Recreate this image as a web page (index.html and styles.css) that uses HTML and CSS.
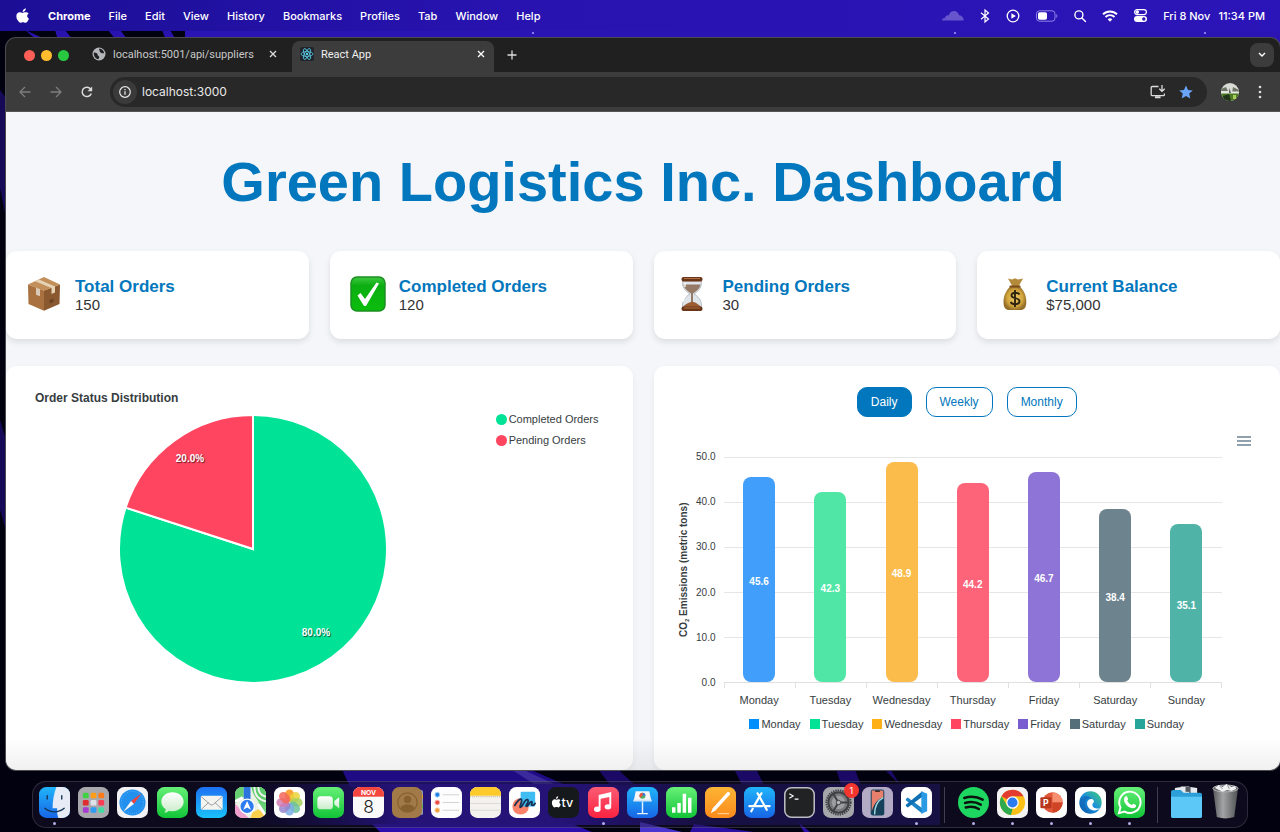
FILE: index.html
```html
<!DOCTYPE html>
<html lang="en">
<head>
<meta charset="utf-8">
<title>React App</title>
<link rel="stylesheet" href="styles.css">
</head>
<body>
<svg class="wallpaper" viewBox="0 0 1280 832" preserveAspectRatio="none" aria-hidden="true">
  <defs><linearGradient id="glow"><stop stop-color="#1a0a6e" stop-opacity="0"/><stop offset=".35" stop-color="#2c0fa8"/><stop offset=".7" stop-color="#2c0fa8"/><stop offset="1" stop-color="#150a50"/></linearGradient></defs>
  <rect width="1280" height="832" fill="#020110"/>
  <rect x="185" width="1095" height="60" fill="#2a15b4"/>
  <path d="M25 30l22 10h-10zM55 30h10l8 10H58zM108 30h12l8 10h-12zM162 30h8l6 10h-10z" fill="#2a12b0"/>
  <path d="M0 90l6 8v120l-6-30zM0 420l6 20v90l-6-20z" fill="#160a58"/>
  <path d="M340 765h180l50 22H350z" fill="#1f0b84"/>
  <path d="M240 784h460v41H240z" fill="url(#glow)"/>
  <path d="M700 784h240v41H700z" fill="#150a50"/>
  <path d="M372 824h200l20 8H380z" fill="#2d0fae"/>
  <path d="M512 770h12l30 14h-20z" fill="#3a2a9c"/>
  <path d="M595 765h18l22 20h-25zM732 765h22l10 20h-22zM835 765h18l8 20h-20zM880 765h8l12 20z" fill="#1a0a66"/>
  <path d="M640 822l42 10h-42z" fill="#4a35d0"/>
  <path d="M690 832l4-8 60 8zM798 822l12 10h-6z" fill="#2c10a4"/>
  <g fill="#a9a0ff"><circle cx="955" cy="33" r="1"/><circle cx="1205" cy="33" r="1"/><circle cx="533" cy="33" r="1"/></g>
</svg>

<header class="menubar">
  <nav class="menus" aria-label="Menu bar">
    <button class="menu-item" aria-label="Apple"><svg width="14" height="16" viewBox="0 0 14 16"><path fill="#fff" d="M9.800.3c.1 1-.3 1.900-.8 2.500-.6.700-1.400 1.200-2.300 1.100-.1-.9.300-1.800.9-2.400C8.200.8 9.100.4 9.800.3zM12.700 5.500c-1 .600-1.500 1.400-1.500 2.400 0 1.200.7 2.200 1.800 2.600-.3.900-.7 1.700-1.200 2.400-.7 1-1.400 1.900-2.400 1.900-1 0-1.300-.6-2.400-.6s-1.500.6-2.400.6c-1 0-1.800-1-2.500-2C.9 11.300.2 9.500.4 7.700.5 5.500 2 4.200 3.600 4.200c1.100 0 2 .7 2.700.7.700 0 1.800-.8 3.200-.7 1.300 0 2.500.5 3.200 1.300z"/></svg></button>
    <button class="menu-item app-name">Chrome</button>
    <button class="menu-item">File</button>
    <button class="menu-item">Edit</button>
    <button class="menu-item">View</button>
    <button class="menu-item">History</button>
    <button class="menu-item">Bookmarks</button>
    <button class="menu-item">Profiles</button>
    <button class="menu-item">Tab</button>
    <button class="menu-item">Window</button>
    <button class="menu-item">Help</button>
  </nav>
  <div class="status">
    <svg width="22" height="12" viewBox="0 0 22 12"><path d="M0 10.500c0-2 1.500-2.700 3-2.600C3.300 6 5 5 6.700 5.500 7.500 2.300 9.700 1 12 1c2.600 0 4.500 1.700 5 4.200 2.700 0 4.600 2 4.800 5.300z" fill="#6655cc"/></svg>
    <svg width="10" height="14" viewBox="0 0 10 14" fill="none" stroke="#fff" stroke-width="1.200"><path d="M1 3.800l7.500 6.200L5 13V1l3.500 3L1 10.200"/></svg>
    <svg width="14" height="14" viewBox="0 0 14 14"><circle cx="7" cy="7" r="5.800" fill="none" stroke="#fff" stroke-width="1.300"/><path d="M5.400 4.300v5.400L9.900 7z" fill="#fff"/></svg>
    <svg width="22" height="12" viewBox="0 0 22 12"><rect x=".5" y=".8" width="18.500" height="10.400" rx="3" fill="none" stroke="#8f83e6"/><rect x="2" y="2.300" width="9" height="7.400" rx="1.700" fill="#fff"/><path d="M20.300 4v4c1.400-.5 1.400-3.500 0-4z" fill="#8f83e6"/></svg>
    <svg width="12" height="12" viewBox="0 0 12 12" fill="none" stroke="#fff" stroke-width="1.400"><circle cx="4.900" cy="4.900" r="4"/><path d="M7.900 7.900l3.600 3.600" stroke-linecap="round"/></svg>
    <svg width="16" height="12" viewBox="0 0 16 12" fill="none" stroke="#fff" stroke-width="1.900"><path d="M1 4.300a10 10 0 0 1 14 0M3.500 7a6.300 6.300 0 0 1 9 0"/><path d="M8 11.800L5.700 9.300a3.300 3.300 0 0 1 4.600 0z" fill="#fff" stroke="none"/></svg>
    <svg width="13" height="13" viewBox="0 0 13 13"><rect x=".6" y=".6" width="11.800" height="5" rx="2.500" fill="none" stroke="#fff" stroke-width="1.200"/><circle cx="3.300" cy="3.100" r="1.800" fill="#fff"/><rect y="7" width="13" height="6" rx="3" fill="#fff"/><circle cx="9.800" cy="10" r="1.700" fill="#2a15b4"/></svg>
    <time class="clock"><span>Fri 8 Nov</span><span>11:34 PM</span></time>
  </div>
</header>

<div class="window">
  <div class="tabstrip">
    <div class="lights">
      <button class="light red" aria-label="Close window"></button>
      <button class="light yellow" aria-label="Minimize window"></button>
      <button class="light green" aria-label="Zoom window"></button>
    </div>
    <div class="tabs">
      <div class="tab">
        <svg width="14" height="14" viewBox="0 0 14 14"><circle cx="7" cy="7" r="6.500" fill="#b4b6ba"/><path d="M1.800 5.500c1.700-.2 3.700.6 3.900 2.400.1 1 1.500.8 1.500 2 0 1-.6 1.700-.7 2.400C3.800 12 1.500 9.500 1.800 5.500zM7 1.800c-.2 1.500 1 1.400.8 2.700-.1 1 .9.900 1.600 1.400.6.500 1.800.3 2.700.4C12 3.500 9.500 1.600 7 1.800z" fill="#202122"/></svg>
        <span class="tab-title">localhost:5001/api/suppliers</span>
        <button class="icon-btn" aria-label="Close tab"><svg width="8" height="8" viewBox="0 0 8 8"><path d="M1 1l6 6M7 1L1 7" stroke="#dcdcdc" stroke-width="1.300"/></svg></button>
      </div>
      <div class="tab active">
        <svg width="14" height="14" viewBox="0 0 14 14"><rect width="14" height="14" rx="2" fill="#20252c"/><g fill="none" stroke="#5ccde8" stroke-width=".8"><ellipse cx="7" cy="7" rx="6" ry="2.400"/><ellipse cx="7" cy="7" rx="6" ry="2.400" transform="rotate(60 7 7)"/><ellipse cx="7" cy="7" rx="6" ry="2.400" transform="rotate(120 7 7)"/></g><circle cx="7" cy="7" r="1.200" fill="#5ccde8"/></svg>
        <span class="tab-title">React App</span>
        <button class="icon-btn" aria-label="Close tab"><svg width="8" height="8" viewBox="0 0 8 8"><path d="M1 1l6 6M7 1L1 7" stroke="#fff" stroke-width="1.300"/></svg></button>
      </div>
    </div>
    <button class="icon-btn new-tab" aria-label="New tab"><svg width="10" height="10" viewBox="0 0 10 10"><path d="M5 .5v9M.5 5h9" stroke="#dcdcdc" stroke-width="1.300"/></svg></button>
    <button class="tab-search" aria-label="Search tabs"><svg width="8" height="6" viewBox="0 0 8 6"><path d="M1 1l3 3 3-3" fill="none" stroke="#fff" stroke-width="1.400"/></svg></button>
  </div>

  <div class="toolbar">
    <button class="icon-btn" aria-label="Back"><svg width="12" height="12" viewBox="0 0 12 12" fill="none" stroke="#7d7d7d" stroke-width="1.300"><path d="M11.500 6H1M6 1L1 6l5 5"/></svg></button>
    <button class="icon-btn" aria-label="Forward"><svg width="12" height="12" viewBox="0 0 12 12" fill="none" stroke="#7d7d7d" stroke-width="1.300"><path d="M.5 6H11M6 1l5 5-5 5"/></svg></button>
    <button class="icon-btn" aria-label="Reload"><svg width="12" height="12" viewBox="0 0 12 12"><path d="M10.300 7.500A4.700 4.700 0 1 1 9.600 3" fill="none" stroke="#dcdcdc" stroke-width="1.500"/><path d="M11.200.5v4.700H6.500z" fill="#dcdcdc"/></svg></button>
    <div class="omnibox">
      <button class="site-info" aria-label="Site information"><svg width="12" height="12" viewBox="0 0 12 12"><circle cx="6" cy="6" r="5.300" fill="none" stroke="#e8e8e8" stroke-width="1.200"/><path d="M6 5.300v3.500M6 3v1.300" stroke="#e8e8e8" stroke-width="1.300"/></svg></button>
      <input class="url" type="text" value="localhost:3000" aria-label="Address">
      <button class="icon-btn" aria-label="Install app"><svg width="16" height="14" viewBox="0 0 16 14" fill="none" stroke="#dcdcdc" stroke-width="1.300"><path d="M8.500 1.500H2.200a1 1 0 0 0-1 1v7.200a1 1 0 0 0 1 1h11.200a1 1 0 0 0 1-1V8.500M12 0v6M9.300 3.700L12 6.400l2.700-2.700"/><path d="M5 12.300h5.500" stroke-width="2"/></svg></button>
      <button class="icon-btn" aria-label="Edit bookmark"><svg width="14" height="14" viewBox="0 0 14 14"><path d="M7 .5l2 4.500 4.800.4-3.600 3.200 1.100 4.800L7 10.900l-4.300 2.500 1.100-4.800L.2 5.400 5 5z" fill="#6aa5fb"/></svg></button>
    </div>
    <button class="icon-btn" aria-label="Profile"><svg width="18" height="18" viewBox="0 0 18 18"><defs><clipPath id="avatar"><circle cx="9" cy="9" r="9"/></clipPath></defs><g clip-path="url(#avatar)"><rect width="18" height="18" fill="#d9dbd6"/><path d="M0 6l5-2 2 4H0zM12 4l6 3v3h-7z" fill="#6d7666"/><rect y="8.500" width="18" height="2" fill="#e8eae4"/><rect y="10.500" width="18" height="8" fill="#4d7a26"/><path d="M2 13l6-2 2 7H3z" fill="#20351a"/><path d="M12 12h3v4h-3z" fill="#a8cf58"/><path d="M8.500 5l1.500 5H8z" fill="#555"/></g></svg></button>
    <button class="icon-btn kebab" aria-label="Chrome menu"><svg width="4" height="14" viewBox="0 0 4 14" fill="#e0e0e0"><circle cx="2" cy="2" r="1.300"/><circle cx="2" cy="7" r="1.300"/><circle cx="2" cy="12" r="1.300"/></svg></button>
  </div>

  <main class="page">
    <h1 class="page-title">Green Logistics Inc. Dashboard</h1>

    <section class="stats">
      <article class="stat">
        <svg class="stat-icon" viewBox="0 0 36 36"><path d="M2 8.500l16 6v20.300L2.500 28z" fill="#a9713f"/><path d="M34 8.500l-16 6v20.300L33.500 28z" fill="#8b5930"/><path d="M2 8.500L18 1l16 7.500-16 6.200z" fill="#c28e5a"/><path d="M9 5.200L25.500 12v6l3.500-1.600v-6L13 3.400z" fill="#e6d2b4"/><path d="M10 11.700v7l4 1.600v-7z" fill="#e7e0d6" opacity=".8"/><path d="M23.500 24l4-1.600v3.500l-4 1.700z" fill="#6b4220"/></svg>
        <div class="stat-text"><h2 class="stat-title">Total Orders</h2><p class="stat-value">150</p></div>
      </article>
      <article class="stat">
        <svg class="stat-icon" viewBox="0 0 36 36"><defs><linearGradient id="tick" x2="0" y2="1"><stop stop-color="#3fca43"/><stop offset=".25" stop-color="#0cae12"/><stop offset="1" stop-color="#0bbd0d"/></linearGradient></defs><rect x="1" y="1" width="34" height="34" rx="6" fill="url(#tick)" stroke="#1c8f22" stroke-width="1.500"/><path d="M7.500 19.500l3-2.500 4.500 6L26.500 6.500l2.500 1L16 30h-2z" fill="#fff"/></svg>
        <div class="stat-text"><h2 class="stat-title">Completed Orders</h2><p class="stat-value">120</p></div>
      </article>
      <article class="stat">
        <svg class="stat-icon" viewBox="0 0 36 36"><path d="M8.500 5h19c0 6-1.500 9-7.500 13 6 3.500 7.500 7.500 7.500 13h-19c0-5.500 1.500-9.500 7.500-13-6-4-7.500-7-7.500-13z" fill="#dfe5ea" stroke="#b6bdc5"/><path d="M9.500 8.500h17c-.5 3.500-3 6-7.500 9v9.500c4 1 7.500 2.500 8 4H9c.5-1.500 4-3 8-4v-9.500c-4.500-3-7-5.500-7.500-9z" fill="#957a68"/><path d="M17 26c3-1 8 2.500 9.500 5.200H9.500C11 28.500 14 26.500 17 26z" fill="#9c5d33"/><path d="M12 19.500c-2 2-2.500 4-2.500 6M11 7v4" stroke="#fff" stroke-width="1.300" fill="none"/><rect x="7.500" y="1" width="21" height="4.500" rx="2" fill="#6b3517"/><rect x="7.500" y="30.500" width="21" height="4.500" rx="2" fill="#6b3517"/><path d="M10 2.500h16M10 32h16" stroke="#b26e45"/></svg>
        <div class="stat-text"><h2 class="stat-title">Pending Orders</h2><p class="stat-value">30</p></div>
      </article>
      <article class="stat">
        <svg class="stat-icon" viewBox="0 0 36 36"><defs><radialGradient id="bag"><stop stop-color="#f0ce68"/><stop offset=".7" stop-color="#d0a33b"/><stop offset="1" stop-color="#96702a"/></radialGradient></defs><path d="M11 2.500l4 1 3-1.300 3 1.300 5-1-4.500 8h-6z" fill="#b48a3c"/><path d="M14 10h8c5 4 7.500 10 7.300 16 0 6-2.300 8-5.500 8H12c-3.200 0-5.500-2-5.500-8C6.500 20 9 14 14 10z" fill="url(#bag)"/><path d="M13.500 10.500h9" stroke="#7b4d1c" stroke-width="2.200" stroke-linecap="round"/><path d="M22.500 18.500c-1-2-8-3-8 .9 0 3.600 8 2 8 5.800 0 3.800-7.500 3.600-8.800.8M18 14v17" fill="none" stroke="#2e2410" stroke-width="1.900"/></svg>
        <div class="stat-text"><h2 class="stat-title">Current Balance</h2><p class="stat-value">$75,000</p></div>
      </article>
    </section>

    <section class="charts">
      <article class="panel status-panel">
        <h3 class="chart-title">Order Status Distribution</h3>
        <div class="pie-row">
          <svg class="pie" viewBox="0 0 270 270" role="img" aria-label="Completed 80%, pending 20%">
            <path d="M135 135V1A134 134 0 1 1 7.560 93.590z" fill="#00e396" stroke="#fff" stroke-width="2"/>
            <path d="M135 135L7.560 93.590A134 134 0 0 1 135 1z" fill="#ff4560" stroke="#fff" stroke-width="2"/>
            <text class="pie-label" x="198" y="222">80.0%</text>
            <text class="pie-label" x="72" y="48">20.0%</text>
          </svg>
          <ul class="pie-legend">
            <li><i class="dot completed"></i>Completed Orders</li>
            <li><i class="dot pending"></i>Pending Orders</li>
          </ul>
        </div>
      </article>

      <article class="panel emissions-panel">
        <div class="range">
          <button class="range-btn selected">Daily</button>
          <button class="range-btn">Weekly</button>
          <button class="range-btn">Monthly</button>
        </div>
        <div class="chart-tools">
          <button class="icon-btn" aria-label="Chart menu"><svg width="14" height="10" viewBox="0 0 14 10"><path d="M0 1h14M0 5h14M0 9h14" stroke="#6e8192" stroke-width="1.500"/></svg></button>
        </div>
        <div class="bar-chart">
          <div class="axis-title"><span>CO<sub>2</sub> Emissions (metric tons)</span></div>
          <div class="y-axis"><span>50.0</span><span>40.0</span><span>30.0</span><span>20.0</span><span>10.0</span><span>0.0</span></div>
          <div class="plot">
            <div class="slot"><div class="bar mon" style="height:91.2%">45.6</div></div>
            <div class="slot"><div class="bar tue" style="height:84.6%">42.3</div></div>
            <div class="slot"><div class="bar wed" style="height:97.8%">48.9</div></div>
            <div class="slot"><div class="bar thu" style="height:88.4%">44.2</div></div>
            <div class="slot"><div class="bar fri" style="height:93.4%">46.7</div></div>
            <div class="slot"><div class="bar sat" style="height:76.8%">38.4</div></div>
            <div class="slot"><div class="bar sun" style="height:70.2%">35.1</div></div>
          </div>
          <div class="ticks"><i></i><i></i><i></i><i></i><i></i><i></i><i></i></div>
          <div class="x-axis"><span>Monday</span><span>Tuesday</span><span>Wednesday</span><span>Thursday</span><span>Friday</span><span>Saturday</span><span>Sunday</span></div>
        </div>
        <ul class="bar-legend">
          <li><i class="swatch mon"></i>Monday</li>
          <li><i class="swatch tue"></i>Tuesday</li>
          <li><i class="swatch wed"></i>Wednesday</li>
          <li><i class="swatch thu"></i>Thursday</li>
          <li><i class="swatch fri"></i>Friday</li>
          <li><i class="swatch sat"></i>Saturday</li>
          <li><i class="swatch sun"></i>Sunday</li>
        </ul>
      </article>
    </section>
  </main>
</div>

<nav class="dock" aria-label="Dock">
  <svg class="defs" aria-hidden="true"><defs>
    <linearGradient id="g-green" x2="0" y2="1"><stop stop-color="#66f077"/><stop offset="1" stop-color="#12c437"/></linearGradient>
    <linearGradient id="g-blue" x2="0" y2="1"><stop stop-color="#1d70f2"/><stop offset="1" stop-color="#1ac2fb"/></linearGradient>
    <linearGradient id="g-sky" x2="0" y2="1"><stop stop-color="#20b4fb"/><stop offset="1" stop-color="#1766e6"/></linearGradient>
    <linearGradient id="g-red" x2="0" y2="1"><stop stop-color="#fc5c74"/><stop offset="1" stop-color="#fa2340"/></linearGradient>
    <linearGradient id="g-orange" x2="0" y2="1"><stop stop-color="#fdb535"/><stop offset="1" stop-color="#fb8a1c"/></linearGradient>
    <linearGradient id="g-white" x2="0" y2="1"><stop stop-color="#fff"/><stop offset="1" stop-color="#c9ecc9"/></linearGradient>
    <linearGradient id="g-edge" x1="0" y1="1" x2="1" y2="0"><stop stop-color="#0c59a4"/><stop offset=".5" stop-color="#1b8fdc"/><stop offset="1" stop-color="#45d072"/></linearGradient>
    <linearGradient id="g-can" x2="1"><stop stop-color="#555759"/><stop offset=".4" stop-color="#a2a4a6"/><stop offset="1" stop-color="#4e5052"/></linearGradient>
    <clipPath id="plate"><rect width="32" height="32" rx="7.500"/></clipPath>
  </defs></svg>

  <button class="app running" aria-label="Finder"><svg viewBox="0 0 32 32"><g clip-path="url(#plate)"><rect width="32" height="32" fill="url(#g-sky)"/><path d="M18 0h14v32H20c-1-3-1.500-6-1.300-10h-4.700C14 14 15.500 6 18 0z" fill="#e6ebf5"/></g><path d="M8.500 9v3.500M23.500 9v3.500M6 22c6 5 14 5 20 0" stroke="#163352" stroke-width="1.400" fill="none" stroke-linecap="round"/></svg></button>
  <button class="app" aria-label="Launchpad"><svg viewBox="0 0 32 32"><rect width="32" height="32" rx="7.500" fill="#a9a9ad"/><g><rect x="5" y="6" width="6" height="5.500" rx="1.300" fill="#3fd044"/><rect x="13" y="6" width="6" height="5.500" rx="1.300" fill="#ff9e1b"/><rect x="21" y="6" width="6" height="5.500" rx="1.300" fill="#ff7a18"/><rect x="5" y="13.500" width="6" height="5.500" rx="1.300" fill="#df2c30"/><rect x="13" y="13.500" width="6" height="5.500" rx="1.300" fill="#dfe2e8"/><rect x="21" y="13.500" width="6" height="5.500" rx="1.300" fill="#fa3d55"/><rect x="5" y="21" width="6" height="5.500" rx="1.300" fill="#a83bd0"/><rect x="13" y="21" width="6" height="5.500" rx="1.300" fill="#2e9bf5"/><rect x="21" y="21" width="6" height="5.500" rx="1.300" fill="#42dca0"/></g></svg></button>
  <button class="app" aria-label="Safari"><svg viewBox="0 0 32 32"><rect width="32" height="32" rx="7.500" fill="#f2f2f4"/><circle cx="16" cy="16" r="13.500" fill="#2290ee"/><circle cx="16" cy="16" r="11.500" fill="none" stroke="#74b8f5" stroke-width="1" stroke-dasharray=".7 1.500"/><path d="M25.500 6.500L17.500 17.500l-3-3z" fill="#f0443c"/><path d="M6.500 25.500L14.500 14.500l3 3z" fill="#f6f6f6"/></svg></button>
  <button class="app" aria-label="Messages"><svg viewBox="0 0 32 32"><rect width="32" height="32" rx="7.500" fill="url(#g-green)"/><path d="M16 5.500c6.500 0 11.500 4.300 11.500 9.800S22.500 25 16 25c-1.300 0-2.500-.1-3.500-.5-1.500 1.300-3.200 2-5 2 1-1.200 1.500-2.300 1.500-3.500-2.800-1.800-4.500-4.500-4.500-7.700C4.500 9.800 9.500 5.500 16 5.500z" fill="url(#g-white)"/></svg></button>
  <button class="app" aria-label="Mail"><svg viewBox="0 0 32 32"><rect width="32" height="32" rx="7.500" fill="url(#g-blue)"/><rect x="5" y="9" width="22.500" height="14.500" rx="1.500" fill="#f3f3f0"/><path d="M5.500 10l9 8q1.700 1.200 3.400 0l9-8M5.500 23l7.500-7M27 23l-7.500-7" fill="none" stroke="#8d9297" stroke-width=".9"/></svg></button>
  <button class="app" aria-label="Maps"><svg viewBox="0 0 32 32"><g clip-path="url(#plate)"><rect width="32" height="32" fill="#e9f2e5"/><path d="M0 0h9v10L0 17z" fill="#66cf70"/><path d="M0 17l14 15H0z" fill="#ee9fce"/><path d="M17 0h15v32z" fill="#6bd177"/><path d="M13 0h18l1 18C25 17 18 9 17 0" fill="#5ecb6a"/><path d="M24 0c0 5 3 9 8 10M20 0c0 8 4 13 12 15" stroke="#f2f2f2" stroke-width="2" fill="none"/><path d="M18 26l6-3 8 5v4H16z" fill="#fbd04c"/><path d="M9 0h7v18H9z" fill="#2b73dd"/><path d="M0 15l8-4M24 18l8 12" stroke="#fff" stroke-width="3"/></g><circle cx="12.500" cy="20" r="7.500" fill="#2e7cf0" stroke="#fff" stroke-width="1.300"/><path d="M12.500 14.500l4 9-4-2.300-4 2.300z" fill="#fff"/></svg></button>
  <button class="app" aria-label="Photos"><svg viewBox="0 0 32 32"><rect width="32" height="32" rx="7.500" fill="#fff"/><g opacity=".9"><rect x="11.500" y="2.500" width="9" height="13" rx="4.500" fill="#fb9a24"/><rect x="11.500" y="2.500" width="9" height="13" rx="4.500" fill="#e9cf25" opacity=".85" transform="rotate(45 16 16)"/><rect x="11.500" y="2.500" width="9" height="13" rx="4.500" fill="#9fcb46" opacity=".85" transform="rotate(90 16 16)"/><rect x="11.500" y="2.500" width="9" height="13" rx="4.500" fill="#5cbb92" opacity=".85" transform="rotate(135 16 16)"/><rect x="11.500" y="2.500" width="9" height="13" rx="4.500" fill="#6da6e4" opacity=".85" transform="rotate(180 16 16)"/><rect x="11.500" y="2.500" width="9" height="13" rx="4.500" fill="#8d78c8" opacity=".85" transform="rotate(225 16 16)"/><rect x="11.500" y="2.500" width="9" height="13" rx="4.500" fill="#ce6faa" opacity=".85" transform="rotate(270 16 16)"/><rect x="11.500" y="2.500" width="9" height="13" rx="4.500" fill="#f2584a" opacity=".85" transform="rotate(315 16 16)"/></g></svg></button>
  <button class="app" aria-label="FaceTime"><svg viewBox="0 0 32 32"><rect width="32" height="32" rx="7.500" fill="url(#g-green)"/><rect x="4.500" y="9.500" width="16" height="13.500" rx="3.500" fill="url(#g-white)"/><path d="M22 14.500l5-4v11.500l-5-4z" fill="url(#g-white)"/></svg></button>
  <button class="app" aria-label="Calendar"><svg viewBox="0 0 32 32"><g clip-path="url(#plate)"><rect width="32" height="32" fill="#fafafa"/><rect width="32" height="10" fill="#f4453e"/></g><text class="cal-month" x="16" y="8">NOV</text><text class="cal-day" x="16" y="27">8</text></svg></button>
  <button class="app" aria-label="Contacts"><svg viewBox="0 0 32 32"><rect x="27" y="3" width="5" height="26" rx="2" fill="#8f9bb0"/><path d="M31 8v4" stroke="#e8a33a" stroke-width="2"/><path d="M31 18v4" stroke="#5fba5a" stroke-width="2"/><rect width="31" height="32" rx="7.500" fill="#a27a47"/><circle cx="16" cy="16" r="10" fill="none" stroke="#86612f" stroke-width="1.300"/><circle cx="16" cy="12.800" r="3.800" fill="#86612f"/><path d="M8.500 22c2-5.500 13-5.500 15 0-4 5-11 5-15 0z" fill="#86612f"/></svg></button>
  <button class="app" aria-label="Reminders"><svg viewBox="0 0 32 32"><rect width="32" height="32" rx="7.500" fill="#fdfdfd"/><g stroke-width="1"><circle cx="6.500" cy="8" r="2.500" fill="#1e7fe6" stroke="#a9cff7"/><circle cx="6.500" cy="16" r="2.500" fill="#ee4a42" stroke="#f8bdb9"/><circle cx="6.500" cy="24" r="2.500" fill="#f29b37" stroke="#f9d6ae"/></g><path d="M12 8h17M12 16h17M12 24h17" stroke="#d2d2d4" stroke-width="1"/></svg></button>
  <button class="app" aria-label="Notes"><svg viewBox="0 0 32 32"><g clip-path="url(#plate)"><rect width="32" height="32" fill="#f3f2ee"/><rect width="32" height="9" fill="#fccb2b"/></g><path d="M0 10h32" stroke="#b9b08f" stroke-dasharray="1 1"/><path d="M0 17h32M0 24h32" stroke="#dcdad3"/></svg></button>
  <button class="app" aria-label="Freeform"><svg viewBox="0 0 32 32"><rect width="32" height="32" rx="7.500" fill="#fff"/><circle cx="12" cy="20" r="8.500" fill="#f98268"/><rect x="12" y="5" width="15" height="15" rx="1" fill="#3fbdf2"/><path d="M6 19c2-4 6-8 7-6s-3 8-1 8 4-9 7-8-3 7-1 7 3-5 5-5-1 4 1 4 2-1 3-2" fill="none" stroke="#173054" stroke-width="1.800" stroke-linecap="round"/></svg></button>
  <button class="app" aria-label="TV"><svg viewBox="0 0 32 32"><rect width="32" height="32" rx="7.500" fill="#15191c"/><path d="M10.500 9.500c.1 1.600-1 2.700-2.300 2.700 0-1.500 1-2.500 2.300-2.700zM12.800 13.800c-1.600 1.200-1.300 3.500.4 4.300-.6 1.700-1.500 3-2.600 3-.8 0-1-.4-1.900-.4s-1.200.4-1.900.4c-1.500 0-2.800-2.600-2.800-4.800 0-2.500 1.500-3.700 2.900-3.700.9 0 1.500.5 2 .5s1.300-.6 2.300-.5c.7 0 1.300.4 1.600 1.200z" fill="#fff"/><text class="tv" x="14" y="21">tv</text></svg></button>
  <button class="app running" aria-label="Music"><svg viewBox="0 0 32 32"><rect width="32" height="32" rx="7.500" fill="url(#g-red)"/><path d="M12 22V9l11-2.500V19" fill="none" stroke="#fff" stroke-width="2"/><path d="M12 9.500l11-2.500v3L12 12.500z" fill="#fff"/><ellipse cx="9.600" cy="23" rx="3.400" ry="2.800" fill="#fff"/><ellipse cx="20.600" cy="20.500" rx="3.400" ry="2.800" fill="#fff"/></svg></button>
  <button class="app" aria-label="Keynote"><svg viewBox="0 0 32 32"><rect width="32" height="32" rx="7.500" fill="url(#g-sky)"/><path d="M9 4.500h14l2 9.500H7z" fill="#f4f6f8"/><rect x="6.500" y="13" width="19" height="2" fill="#d2e4f5"/><circle cx="16" cy="9" r="3" fill="#4caf60"/><path d="M16 6a3 3 0 0 1 3 3h-3z" fill="#3f76e0"/><path d="M16 9l-2.500 2A3 3 0 0 1 16 6z" fill="#f0503c"/><path d="M16 15v12M10.500 27.500h11" stroke="#e6f2fc" stroke-width="1.500"/></svg></button>
  <button class="app" aria-label="Numbers"><svg viewBox="0 0 32 32"><rect width="32" height="32" rx="7.500" fill="url(#g-green)"/><path d="M8 26.500v-5.500M13.500 26.500v-10M19 26.500V7M24.500 26.500V11" stroke="#fff" stroke-width="3.600"/></svg></button>
  <button class="app" aria-label="Pages"><svg viewBox="0 0 32 32"><rect width="32" height="32" rx="7.500" fill="url(#g-orange)"/><path d="M23 5.500c1.500-1 3.500.7 2.700 2.300L11 24l-5 3 2-5z" fill="#fff"/><path d="M13 27.500h12" stroke="#ffdca6"/></svg></button>
  <button class="app" aria-label="App Store"><svg viewBox="0 0 32 32"><rect width="32" height="32" rx="7.500" fill="url(#g-sky)"/><path d="M14 6.500l9.500 17M18 6.500L10.500 19.500M9 22.500l-1.500 2.500M5.500 19.700h13.500M22.500 19.700h4" stroke="#fff" stroke-width="2.300" stroke-linecap="round"/></svg></button>
  <button class="app" aria-label="Terminal"><svg viewBox="0 0 32 32"><rect x=".8" y=".8" width="30.400" height="30.400" rx="7" fill="#202224" stroke="#b9bbc0" stroke-width="1.600"/><path d="M5.500 7l4 2.300-4 2.300M11 12.500h4" fill="none" stroke="#fff" stroke-width="1.100"/></svg></button>
  <button class="app" aria-label="System Settings"><svg viewBox="0 0 32 32"><rect width="32" height="32" rx="7.500" fill="#a6a7aa"/><circle cx="16" cy="16" r="12.500" fill="none" stroke="#3e4043" stroke-width="2" stroke-dasharray="1.500 .9"/><circle cx="16" cy="16" r="10.500" fill="#77797c" stroke="#3e4043" stroke-width="2"/><circle cx="16" cy="16" r="7" fill="#9b9da0"/><path d="M16 16h10.500M16 16L10.500 7M16 16l-5.500 9" stroke="#3e4043" stroke-width="2"/><circle cx="16" cy="16" r="2.300" fill="#b6b8ba" stroke="#3e4043"/></svg><span class="badge">1</span></button>
  <button class="app" aria-label="iPhone Mirroring"><svg viewBox="0 0 32 32"><rect width="32" height="32" rx="7.500" fill="#b3aac6"/><rect x="9" y="2.500" width="14" height="27" rx="2.500" fill="#15425a"/><path d="M10 3.500h12v7c-7 2-10 8-12 15z" fill="#e9806e"/><path d="M22 11c-6 3-9 9-9 17.500" stroke="#9fd4dc" stroke-width="1.500" fill="none"/><rect x="13.500" y="3.500" width="5" height="1.500" rx=".7" fill="#111"/></svg></button>
  <button class="app running" aria-label="Visual Studio Code"><svg viewBox="0 0 32 32"><rect width="32" height="32" rx="7.500" fill="#fff"/><path d="M5 12.500l2-1.700L22 22v5.500L5 13.800z" fill="#1e83c6"/><path d="M5 19.500l2 1.700L22 10V4.500L5 18.200z" fill="#0f6fb2"/><path d="M21 4.500l6 2.500v18l-6 2.500z" fill="#2a9ae4"/></svg></button>
  <span class="separator"></span>
  <button class="app running" aria-label="Spotify"><svg viewBox="0 0 32 32"><circle cx="16" cy="16" r="16" fill="#1ed760"/><path d="M6.500 11.300c6.500-2 13.500-1.300 19 1.800M7.300 16.500c5.500-1.600 11.500-1 16.200 1.700M8 21.200c4.600-1.200 9.600-.8 13.500 1.500" fill="none" stroke="#0c1410" stroke-width="2.600" stroke-linecap="round"/></svg></button>
  <button class="app running" aria-label="Chrome"><svg viewBox="0 0 32 32"><rect width="32" height="32" rx="7.500" fill="#f3f3f3"/><circle cx="16" cy="16" r="13" fill="#fbc116"/><path d="M16 16L4.700 9.500A13 13 0 0 1 27.300 9.500H16z" fill="#e33b2e"/><path d="M4.700 9.500L10.400 19.300 16 22.500 14.600 29A13 13 0 0 1 4.700 9.500z" fill="#2da94f"/><path d="M21.600 19.300L16 29h-1.500l3-8z" fill="#fbc116"/><circle cx="16" cy="16" r="6.500" fill="#fff"/><circle cx="16" cy="16" r="5.200" fill="#2c7bee"/></svg></button>
  <button class="app running" aria-label="PowerPoint"><svg viewBox="0 0 32 32"><rect width="32" height="32" rx="7.500" fill="#fff"/><circle cx="17" cy="16" r="10.500" fill="#e0583a"/><path d="M17 5.500A10.500 10.500 0 0 1 27.500 16H17z" fill="#f58f70"/><path d="M17 16h10.500A10.500 10.500 0 0 1 17 26.500z" fill="#cf4424"/><rect x="4.500" y="10.500" width="11.500" height="11.500" rx="1" fill="#b9371c"/><text class="ppt" x="10.200" y="19.500">P</text></svg></button>
  <button class="app running" aria-label="Edge"><svg viewBox="0 0 32 32"><rect width="32" height="32" rx="7.500" fill="#fff"/><circle cx="16" cy="16" r="11.500" fill="url(#g-edge)"/><path d="M17 12.500c-5 0-6 6-2.500 9.500 3 3 8 2.800 11.500 0-4.500 1-8.500-1-8-4 .2-1.300 1.500-1.700 1.500-3 0-1.500-1-2.500-2.500-2.500z" fill="#fff"/><path d="M5 14c2-5 9-6.500 12-1.500-5-1.500-8.500 3-6.500 8.500 1 3 3 5 5.500 6C9 27.500 3.500 21 5 14z" fill="#1268b8" opacity=".7"/></svg></button>
  <button class="app running" aria-label="WhatsApp"><svg viewBox="0 0 32 32"><rect width="32" height="32" rx="7.500" fill="url(#g-green)"/><path d="M5 27l1.700-6A11 11 0 1 1 11 25.400z" fill="none" stroke="#fff" stroke-width="2"/><path d="M11.500 10c1-1 1.800-.8 2.200.2l.8 2c.3.800-1 1.600-.8 2.100 1 2 2.300 3.300 4.500 4.200.6.200 1.300-1.500 2-1.200l2.300 1.200c1 .5-.3 3-2 3.300-4.500.8-10-4.500-10.200-8.500 0-1.400.5-2.600 1.200-3.300z" fill="#fff"/></svg></button>
  <span class="separator"></span>
  <button class="app" aria-label="Downloads"><svg viewBox="0 0 32 32"><path d="M4 1l6-1v8H4zM10-.5h9V9h-9zM20 0l7 1v7h-7z" fill="#e6eaee"/><path d="M15 0h4v5h-4z" fill="#55595d"/><path d="M0 5q0-2 2-2h8l3 3h17q2 0 2 2v22q0 2-2 2H2q-2 0-2-2z" fill="#2d9fd8"/><path d="M0 10h32v20q0 2-2 2H2q-2 0-2-2z" fill="#5cc8f8"/></svg></button>
  <button class="app" aria-label="Trash"><svg viewBox="0 0 32 32"><path d="M3 1h26l-4 30q-9 3-18 0z" fill="url(#g-can)"/><ellipse cx="16" cy="1.500" rx="13" ry="3.500" fill="#5d5f61" stroke="#b9bbbd"/><path d="M5 1l4-3 4 2 4-3 5 3 4-1 1 3-5 2-4-1-5 2-4-2z" fill="#f0f1f2"/><path d="M10-1l3 3M18-2l2 4" stroke="#8b8e91"/></svg></button>
</nav>
</body>
</html>
```
FILE: styles.css
```css
* { box-sizing: border-box; }

body {
  margin: 0;
  min-height: 100vh;
  display: flex;
  flex-direction: column;
  font-family: "Liberation Sans", Arial, sans-serif;
  color: #333;
  background: #020110;
}

h1, h2, h3, p, ul { margin: 0; padding: 0; }
ul { list-style: none; }
svg { display: block; overflow: visible; }
button { font: inherit; color: inherit; background: none; border: 0; padding: 0; cursor: pointer; }

.wallpaper {
  position: absolute;
  inset: 0;
  width: 100%;
  height: 100%;
  z-index: -1;
}

/* Menu bar */
.menubar {
  display: flex;
  justify-content: space-between;
  align-items: center;
  height: 31px;
  padding: 0 15px 0 16px;
  background: linear-gradient(90deg, #1c0f96, #2813b0 40%, #2b15b8);
  color: #fff;
  font: 500 11px Inter, sans-serif;
}
.menus, .status, .clock { display: flex; align-items: center; }
.menus { gap: 18px; }
.app-name { font-weight: 700; }
.status { gap: 16px; }
.clock { gap: 8px; }

/* Browser window */
.window {
  flex: 1;
  display: flex;
  flex-direction: column;
  margin: 7px 0 0 6px;
  border-radius: 10px;
  overflow: hidden;
  background: #3c3c3c;
  box-shadow: 0 0 0 1px #4a4a50;
}
.tabstrip {
  display: flex;
  align-items: center;
  height: 34px;
  padding: 0 6px 0 18px;
  background: #202020;
  color: #e3e3e3;
  font: 11px Roboto, sans-serif;
}
.lights { display: flex; gap: 6px; margin-right: 15px; }
.light { width: 11px; height: 11px; border-radius: 50%; }
.red { background: #ff5f57; }
.yellow { background: #febc2e; }
.green { background: #28c840; }
.tabs { display: flex; gap: 6px; }
.tab {
  display: flex;
  align-items: center;
  gap: 7px;
  width: 202px;
  height: 31px;
  margin-top: 3px;
  padding: 0 9px 5px 8px;
  border-radius: 8px 8px 0 0;
  color: #c8c8c8;
}
.tab.active { background: #3c3c3c; color: #f0f0f0; }
.tab-title { flex: 1; white-space: nowrap; }
.icon-btn { display: grid; place-items: center; }
.new-tab { margin-left: 13px; }
.tab-search {
  display: grid;
  place-items: center;
  width: 24px;
  height: 24px;
  margin-left: auto;
  border-radius: 8px;
  background: #3c3c3c;
}
.toolbar {
  display: flex;
  align-items: center;
  gap: 19px;
  height: 40px;
  padding: 0 18px 0 13px;
  border-bottom: 1px solid #555;
}
.omnibox {
  flex: 1;
  display: flex;
  align-items: center;
  gap: 13px;
  height: 30px;
  margin: 0 -5px 0 -2px;
  padding: 0 14px 0 3px;
  border-radius: 15px;
  background: #282828;
}
.site-info {
  display: grid;
  place-items: center;
  width: 24px;
  height: 24px;
  border-radius: 50%;
  background: #3a3a3a;
}
.url {
  flex: 1;
  min-width: 0;
  margin-left: -8px;
  padding: 0;
  border: 0;
  outline: 0;
  background: none;
  color: #e8e8e8;
  font: 12px Inter, sans-serif;
}

/* Dashboard */
.page {
  position: relative;
  flex: 1;
  display: flex;
  flex-direction: column;
  background: #f4f6f9;
}
.page::after {
  content: "";
  position: absolute;
  inset: auto 0 0;
  height: 32px;
  background: linear-gradient(transparent, rgba(0, 0, 0, 0.06));
  pointer-events: none;
}
.page-title {
  margin: 38px 0 37px;
  text-align: center;
  font-size: 56px;
  line-height: 64px;
  color: #0277bd;
}
.stats {
  display: grid;
  grid-template-columns: repeat(4, 1fr);
  gap: 21px;
  margin-bottom: 27px;
}
.stat {
  display: flex;
  align-items: center;
  gap: 13px;
  height: 88px;
  padding: 0 20px;
  border-radius: 11px;
  background: #fff;
  box-shadow: 0 3px 6px rgba(0, 0, 0, 0.1);
}
.stat-icon { width: 36px; height: 36px; margin-bottom: 2px; }
.stat-text { padding-top: 2px; line-height: 18px; }
.stat-title { font-size: 17px; color: #0277bd; }
.stat-value { font-size: 15px; }

.charts {
  flex: 1;
  display: grid;
  grid-template-columns: repeat(2, 1fr);
  gap: 21px;
}
.panel {
  border-radius: 11px;
  background: #fff;
  box-shadow: 0 3px 6px rgba(0, 0, 0, 0.06);
}
.status-panel { padding: 24px 34px 24px 29px; }
.chart-title { font-size: 12px; line-height: 16px; color: #373d3f; }
.pie-row {
  display: flex;
  justify-content: space-between;
  align-items: flex-start;
  padding-top: 3px;
}
.pie { width: 270px; height: 270px; margin: 5px 0 0 83px; }
.pie-label {
  fill: #fff;
  font-size: 10px;
  font-weight: 700;
  text-anchor: middle;
  text-shadow: 1px 1px 1px rgba(0, 0, 0, 0.6);
}
.pie-legend { font-size: 11px; line-height: 21px; color: #373d3f; }
.pie-legend li, .bar-legend li { display: flex; align-items: center; gap: 2px; }
.dot { width: 11px; height: 11px; border-radius: 50%; }
.completed { background: #00e396; }
.pending { background: #ff4560; }

.emissions-panel { padding-top: 21px; }
.range { display: flex; justify-content: center; gap: 14px; }
.range-btn {
  height: 30px;
  padding: 0 13px;
  border: 1px solid #0277bd;
  border-radius: 10px;
  color: #0277bd;
  font-size: 12px;
}
.range-btn.selected { background: #0277bd; color: #fff; }
.chart-tools {
  display: flex;
  justify-content: flex-end;
  height: 16px;
  margin: 16px 29px 8px 0;
}
.bar-chart {
  display: grid;
  grid-template-columns: 16px 24px 1fr;
  grid-template-rows: 226px 5px auto;
  margin: 0 58px 0 22px;
  font-size: 10px;
  color: #373d3f;
}
.axis-title {
  display: grid;
  place-items: center;
  writing-mode: vertical-rl;
  transform: rotate(180deg);
  font-weight: 700;
  white-space: nowrap;
}
.axis-title sub { font-size: 6px; }
.y-axis {
  display: flex;
  flex-direction: column;
  justify-content: space-between;
  margin: -8px 0;
  text-align: right;
  line-height: 16px;
}
.plot, .ticks, .x-axis { display: grid; grid-template-columns: repeat(7, 1fr); grid-column: 3; margin-left: 8px; }
.plot {
  border-bottom: 1px solid #e0e0e0;
  background: linear-gradient(#e6e6e6 1px, transparent 1px) 0 0 / 100% 45px;
}
.slot { display: flex; align-items: flex-end; justify-content: center; }
.bar {
  display: grid;
  place-items: center;
  width: 32px;
  padding-top: 4px;
  border-radius: 8px;
  color: #fff;
  font-weight: 700;
}
.ticks { border-right: 1px solid #e0e0e0; }
.ticks i { border-left: 1px solid #e0e0e0; }
.x-axis { padding-top: 4px; font-size: 11px; line-height: 16px; }
.x-axis span { display: flex; justify-content: center; }
.bar-legend {
  display: flex;
  justify-content: center;
  gap: 9px;
  margin-top: 8px;
  font-size: 11px;
  line-height: 16px;
  color: #373d3f;
}
.swatch { width: 10px; height: 10px; }
.mon { background: #008ffb; }
.tue { background: #00e396; }
.wed { background: #feb019; }
.thu { background: #ff4560; }
.fri { background: #775dd0; }
.sat { background: #546e7a; }
.sun { background: #26a69a; }
.bar.mon { background: #419ffb; }
.bar.tue { background: #50e7a6; }
.bar.wed { background: #fcbc4c; }
.bar.thu { background: #fd6379; }
.bar.fri { background: #8d74d6; }
.bar.sat { background: #6d838d; }
.bar.sun { background: #50b3a8; }

/* Dock */
.dock {
  display: flex;
  justify-content: space-between;
  align-items: flex-start;
  height: 47px;
  margin: 11px 32px 4px;
  padding: 5px 6px;
  border: 1px solid rgba(255, 255, 255, 0.14);
  border-radius: 14px;
  background: rgba(28, 26, 48, 0.4);
}
.defs { position: absolute; width: 0; height: 0; }
.app { position: relative; width: 31px; }
.app svg { width: 31px; height: 31px; }
.running::after {
  content: "";
  position: absolute;
  left: 14px;
  bottom: -7px;
  width: 3px;
  height: 3px;
  border-radius: 50%;
  background: #b4aee6;
}
.separator { width: 1px; height: 36px; margin: 0 4px; background: rgba(255, 255, 255, 0.22); }
.badge {
  position: absolute;
  top: -4px;
  right: -5px;
  width: 15px;
  height: 15px;
  border-radius: 50%;
  background: #f5362f;
  color: #fff;
  font: 9px/15px Inter, sans-serif;
}
.cal-month { fill: #fff; font: 700 7px Inter, sans-serif; text-anchor: middle; }
.cal-day { fill: #222; font: 300 18px Inter, sans-serif; text-anchor: middle; }
.tv { fill: #fff; font: 500 13px Inter, sans-serif; }
.ppt { fill: #fff; font: 700 9px Inter, sans-serif; text-anchor: middle; }
```
